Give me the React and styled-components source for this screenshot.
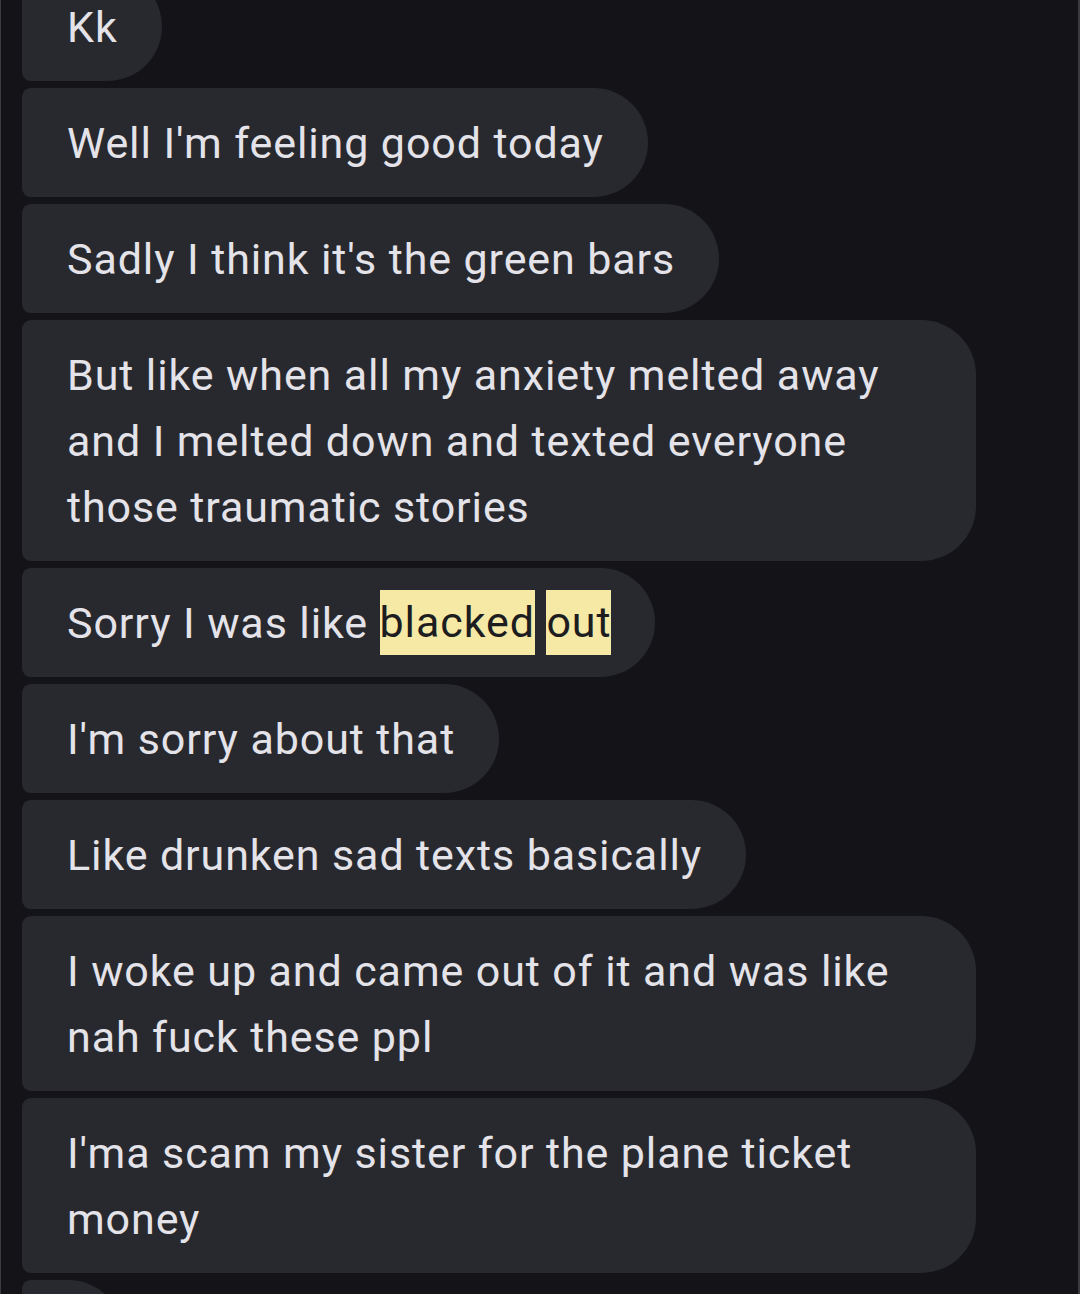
import React from "react";
import styled, { createGlobalStyle } from "styled-components";

const Global = createGlobalStyle`
  html, body { margin: 0; padding: 0; background: #141418; }
  body { overflow: hidden; }
`;

const Screen = styled.div`
  width: 1080px;
  height: 1294px;
  box-sizing: border-box;
  background: #141418;
  border-left: 1px solid #3a3a3f;
  border-right: 2px solid #3a3a3f;
  overflow: hidden;
  font-family: Roboto, "Noto Sans", sans-serif;
`;

const Thread = styled.div`
  display: flex;
  flex-direction: column;
  align-items: flex-start;
  gap: 7px;
  padding-left: 21px;
  margin-top: -28px;
`;

const Bubble = styled.div`
  box-sizing: border-box;
  max-width: 954px;
  background: #28292e;
  color: #e4e3e9;
  font-size: 43px;
  letter-spacing: 0.9px;
  line-height: 66px;
  padding: 22px 44px 21px 45px;
  border-radius: 9px 55px 55px 9px;
`;

const Mark = styled.span`
  background: #f6e9a5;
  color: #1d1d1f;
  display: inline-block;
  vertical-align: top;
  height: 65px;
  line-height: 65px;
`;

const messages = [
  "Kk",
  "Well I'm feeling good today",
  "Sadly I think it's the green bars",
  "But like when all my anxiety melted away and I melted down and texted everyone those traumatic stories",
  null,
  "I'm sorry about that",
  "Like drunken sad texts basically",
  "I woke up and came out of it and was like nah fuck these ppl",
  "I'ma scam my sister for the plane ticket money",
  "\u00a0",
];

export default function App() {
  return (
    <>
      <Global />
      <Screen>
        <Thread>
          {messages.map((m, i) =>
            m === null ? (
              <Bubble key={i}>
                Sorry I was like <Mark>blacked</Mark> <Mark>out</Mark>
              </Bubble>
            ) : (
              <Bubble key={i}>{m}</Bubble>
            )
          )}
        </Thread>
      </Screen>
    </>
  );
}
